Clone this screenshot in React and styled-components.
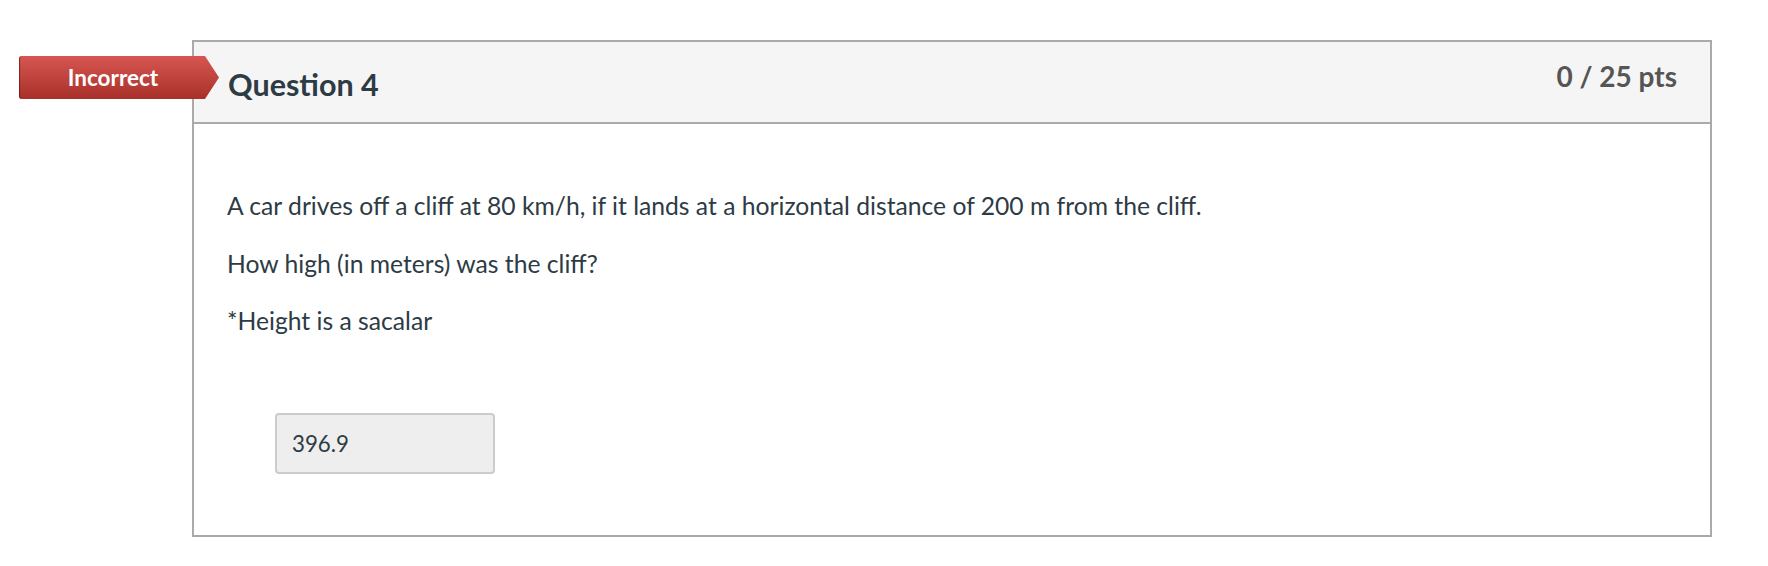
import React from 'react';
import styled, { createGlobalStyle } from 'styled-components';

const GlobalStyle = createGlobalStyle`
  html, body {
    margin: 0;
    padding: 0;
    background: #fff;
  }
  body {
    font-family: Lato, "Liberation Sans", sans-serif;
    color: #2d3b45;
  }
`;

const Page = styled.div`
  padding: 40px 56px 31px 192px;
`;

const Card = styled.div`
  position: relative;
  border: 2px solid #aaaaaa;
`;

const Badge = styled.div`
  position: absolute;
  left: -175px;
  top: 14px;
  width: 186px;
  height: 43px;
  display: flex;
  align-items: center;
  justify-content: center;
  color: #fff;
  font-weight: 700;
  font-size: 22.5px;
  background: linear-gradient(#d85651, #a8302a);
  border-radius: 3px 0 0 3px;
  box-shadow: inset 2px 0 1px -1px rgba(80, 10, 10, 0.6);
  padding-left: 2px;
  box-sizing: border-box;

  &::after {
    content: '';
    position: absolute;
    right: -14px;
    top: 0;
    width: 14px;
    height: 43px;
    background: linear-gradient(#d85651, #a8302a);
    clip-path: polygon(0 0, 100% 50%, 0 100%);
  }
`;

const Header = styled.div`
  display: flex;
  justify-content: space-between;
  align-items: flex-start;
  height: 82px;
  box-sizing: border-box;
  padding: 0 33px 0 34px;
  background: #f5f5f5;
  border-bottom: 2px solid #aaaaaa;
`;

const Title = styled.h2`
  margin: 24px 0 0;
  font-size: 30.5px;
  font-weight: 700;
  line-height: 1.2;
  color: #2d3b45;
`;

const Points = styled.div`
  margin-top: 18px;
  font-size: 28px;
  font-weight: 700;
  line-height: 1.2;
  color: #555555;
`;

const Body = styled.div`
  padding: 64px 33px 61px;
`;

const Para = styled.p`
  margin: 0 0 21.5px;
  font-size: 24.7px;
  line-height: 36px;

  &:last-of-type {
    margin-bottom: 0;
  }
`;

const Answer = styled.div`
  margin: 74px 0 0 48px;
  width: 220px;
  height: 61px;
  box-sizing: border-box;
  display: flex;
  align-items: center;
  padding-left: 15px;
  background: #eeeeee;
  border: 2px solid #cccccc;
  border-radius: 4px;
  font-size: 22.3px;
  color: #2d3b45;
`;

export default function App() {
  return (
    <>
      <GlobalStyle />
      <Page>
        <Card>
          <Badge>Incorrect</Badge>
          <Header>
            <Title>Question 4</Title>
            <Points>0 / 25 pts</Points>
          </Header>
          <Body>
            <Para>A car drives off a cliff at 80 km/h, if it lands at a horizontal distance of 200 m from the cliff.</Para>
            <Para>How high (in meters) was the cliff?</Para>
            <Para>*Height is a sacalar</Para>
            <Answer>396.9</Answer>
          </Body>
        </Card>
      </Page>
    </>
  );
}
